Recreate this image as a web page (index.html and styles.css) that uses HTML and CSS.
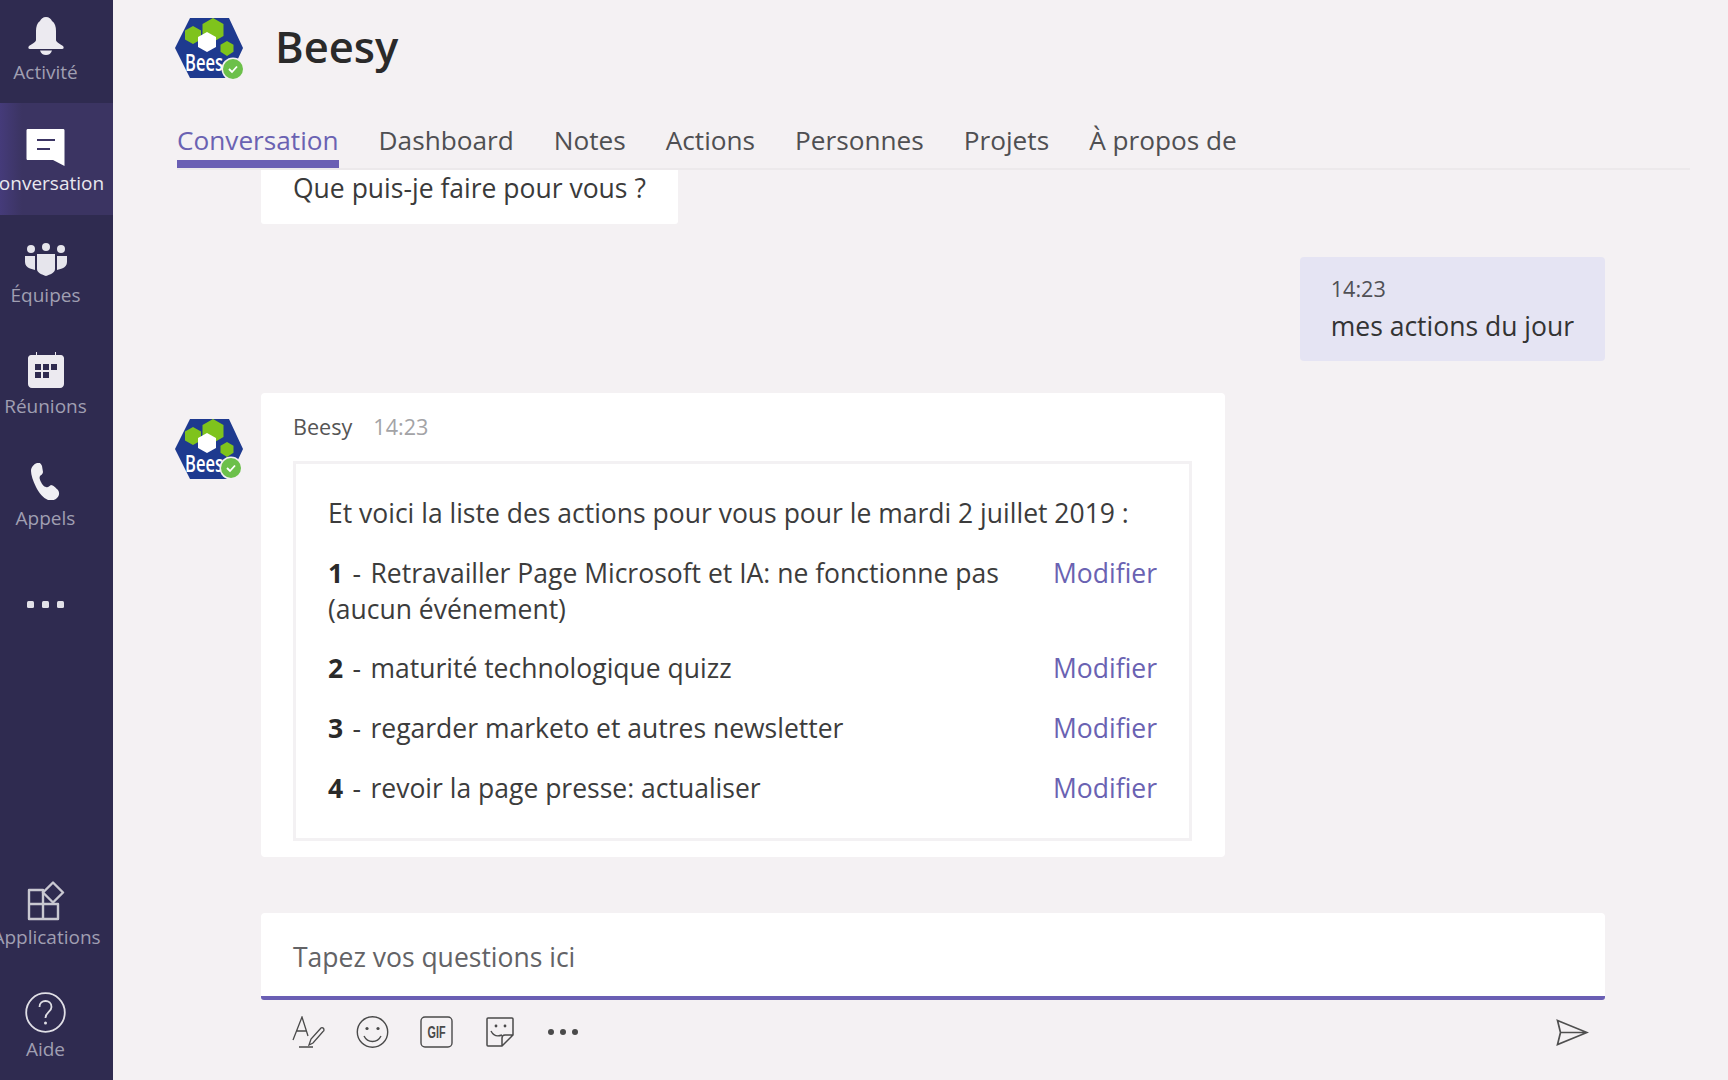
FILE: index.html
```html
<!DOCTYPE html>
<html lang="fr">
<head>
<meta charset="utf-8">
<title>Beesy</title>
<link rel="stylesheet" href="styles.css">
</head>
<body>
<div class="app">
  <nav class="rail">
    <div class="rail-inner">
      <div class="rail-item">
        <div class="rail-icon">
          <svg width="36" height="38" viewBox="0 0 36 38"><path fill="#eceaf0" d="M18 0c3 0 5 2 6 4 3 2 4 6 4 10v9c0 2 4 4 7 6 1 1 1 3-1 3H2c-2 0-2-2-1-3 3-2 7-4 7-6v-9c0-4 1-8 4-10 1-2 3-4 6-4z"/><path fill="#eceaf0" d="M12 33.500h12c-1 3-3 4.500-6 4.500s-5-1.500-6-4.500z"/></svg>
        </div>
        <span class="rail-label">Activité</span>
      </div>
      <div class="rail-item rail-item-active">
        <div class="rail-icon">
          <svg width="39" height="37" viewBox="0 0 39 37"><path fill="#fff" d="M2 0h35c1 0 1.500.500 1.500 1.500V37L27 31H2c-1 0-1.500-.500-1.500-1.500v-28C.5.500 1 0 2 0z"/><path fill="none" stroke="#3c3564" stroke-width="1.800" d="M11 11h18M11 20h13"/></svg>
        </div>
        <span class="rail-label rail-label-long">Conversation</span>
      </div>
      <div class="rail-item">
        <div class="rail-icon rail-icon-low">
          <svg width="42" height="33" viewBox="0 0 42 33"><g fill="#e6e5ec"><circle cx="6" cy="6" r="4"/><circle cx="21" cy="4" r="4"/><circle cx="36" cy="6" r="4"/><path d="M0 13h10v14l-5-1.500C2 24.500 0 22 0 19zM32 13h10v6c0 3-2 5.500-5 6.500L32 27zM12 11h18v15c0 4-5 5.500-9 7-4-1.500-9-3-9-7z"/></g></svg>
        </div>
        <span class="rail-label">Équipes</span>
      </div>
      <div class="rail-item">
        <div class="rail-icon">
          <svg width="36" height="36" viewBox="0 0 36 36"><path fill="#eceaf0" d="M3 3h5V0h1v3h18V0h1v3h5c1.500 0 3 1.500 3 3v26c0 2-1.500 4-4 4H4c-2.500 0-4-2-4-4V6c0-1.500 1.500-3 3-3z"/><g fill="#2f2b50"><rect x="7" y="12" width="6" height="6"/><rect x="15" y="12" width="6" height="6"/><rect x="23" y="12" width="6" height="6"/><rect x="7" y="20" width="6" height="6"/><rect x="15" y="20" width="6" height="6"/></g></svg>
        </div>
        <span class="rail-label">Réunions</span>
      </div>
      <div class="rail-item">
        <div class="rail-icon">
          <svg width="29" height="37" viewBox="0 0 29 37"><path fill="#f0eff3" d="M6 0c3-1 4 1 5 3l1 6c0 2-2 3-3 4-1 2 0 4 1 6s3 5 5 5c2 1 3-1 5-2 2 0 5 3 7 5 2 3 1 6-1 8-2 2-5 3-9 2-5-2-9-7-12-13C2 18 0 12 0 8c0-4 3-7 6-8z"/></svg>
        </div>
        <span class="rail-label">Appels</span>
      </div>
      <div class="rail-more">
        <span class="rail-dot"></span><span class="rail-dot"></span><span class="rail-dot"></span>
      </div>
      <div class="rail-item rail-item-apps">
        <div class="rail-icon">
          <svg width="38" height="40" viewBox="0 0 38 40"><g fill="none" stroke="#c9c8d1" stroke-width="2.400" stroke-linejoin="round"><path d="M2 9h14v14H2zM2 23h14v15H2zM16 23h15v15H16z"/><path d="M26 1.500l10 10-10 10-10-10z"/></g></svg>
        </div>
        <span class="rail-label rail-label-apps">Applications</span>
      </div>
      <div class="rail-item">
        <div class="rail-icon">
          <svg width="41" height="41" viewBox="0 0 41 41"><circle cx="20.500" cy="20.500" r="19.300" fill="none" stroke="#e0dfe6" stroke-width="1.800"/><path fill="none" stroke="#e0dfe6" stroke-width="1.800" d="M14.500 15c0-4 3-6 6-6s6 2 6 6c0 5-6 5-6 11"/><circle cx="20.500" cy="31" r="1.500" fill="#e0dfe6"/></svg>
        </div>
        <span class="rail-label">Aide</span>
      </div>
    </div>
  </nav>

  <main class="main">
    <header class="header">
      <svg class="logo" width="68" height="62" viewBox="0 0 68 62">
        <path fill="#1e3a8f" d="M15 0h39l14 30-14 30H15L0 30z"/>
        <path fill="#7fc31c" d="M18 8l8 4.500v9L18 26l-8-4.500v-9zM38 0l10.500 6v12L38 24l-10.500-6V6zM52 23l6.500 3.800v7L52 38l-6.500-4.200v-7z"/>
        <path fill="#fff" d="M32 14l9 5v10l-9 5-9-5V19z"/>
        <text class="logo-text" x="10" y="53" textLength="38" lengthAdjust="spacingAndGlyphs">Bees</text>
        <circle cx="58" cy="51" r="11.500" fill="#f4f1f3"/>
        <circle cx="58" cy="51" r="10" fill="#6cc04a"/>
        <path fill="none" stroke="#fff" stroke-width="1.800" d="M54 51l3 3 5-5.500"/>
      </svg>
      <h1 class="title">Beesy</h1>
    </header>

    <div class="tabs">
      <span class="tab tab-active">Conversation</span>
      <span class="tab">Dashboard</span>
      <span class="tab">Notes</span>
      <span class="tab">Actions</span>
      <span class="tab">Personnes</span>
      <span class="tab">Projets</span>
      <span class="tab">À propos de</span>
    </div>

    <section class="thread">
      <div class="bubble-top">Que puis-je faire pour vous ?</div>
      <div class="bubble-own">
        <div class="meta-time-own">14:23</div>
        <div class="bubble-text">mes actions du jour</div>
      </div>
      <div class="msg-row">
        <svg class="logo" width="68" height="62" viewBox="0 0 68 62">
          <path fill="#1e3a8f" d="M15 0h39l14 30-14 30H15L0 30z"/>
          <path fill="#7fc31c" d="M18 8l8 4.500v9L18 26l-8-4.500v-9zM38 0l10.500 6v12L38 24l-10.500-6V6zM52 23l6.500 3.800v7L52 38l-6.500-4.200v-7z"/>
          <path fill="#fff" d="M32 14l9 5v10l-9 5-9-5V19z"/>
          <text class="logo-text" x="10" y="53" textLength="38" lengthAdjust="spacingAndGlyphs">Bees</text>
          <circle cx="56" cy="49" r="11.500" fill="#f4f1f3"/>
          <circle cx="56" cy="49" r="10" fill="#6cc04a"/>
          <path fill="none" stroke="#fff" stroke-width="1.800" d="M52 49l3 3 5-5.500"/>
        </svg>
        <article class="card">
          <div class="card-head"><span class="sender">Beesy</span><span class="time">14:23</span></div>
          <div class="card-box">
            <p class="intro">Et voici la liste des actions pour vous pour le mardi 2 juillet 2019 :</p>
            <div class="action"><p class="action-text"><b>1</b> <span class="dash">-</span> Retravailler Page Microsoft et IA: ne fonctionne pas (aucun événement)</p><span class="action-link">Modifier</span></div>
            <div class="action"><p class="action-text"><b>2</b> <span class="dash">-</span> maturité technologique quizz</p><span class="action-link">Modifier</span></div>
            <div class="action"><p class="action-text"><b>3</b> <span class="dash">-</span> regarder marketo et autres newsletter</p><span class="action-link">Modifier</span></div>
            <div class="action"><p class="action-text"><b>4</b> <span class="dash">-</span> revoir la page presse: actualiser</p><span class="action-link">Modifier</span></div>
          </div>
        </article>
      </div>
    </section>

    <div class="composer">Tapez vos questions ici</div>

    <div class="toolbar">
      <svg class="tool" width="33" height="32" viewBox="0 0 33 32"><g fill="none" stroke="#4a4a4a" stroke-width="1.300"><path d="M1 24L10 1l6 19M4 15h10M7 31h14"/><path d="M17 29l2-6 10-11c1-1 3 0 3 2 0 .5 0 1-1 1.500L21 27z"/></g></svg>
      <svg class="tool" width="33" height="32" viewBox="0 0 33 32"><circle cx="16.500" cy="16" r="15.200" fill="none" stroke="#4a4a4a" stroke-width="1.400"/><circle cx="11" cy="12.500" r="1.600" fill="#4a4a4a"/><circle cx="22" cy="12.500" r="1.600" fill="#4a4a4a"/><path fill="none" stroke="#4a4a4a" stroke-width="1.400" d="M8 20c2 4 5 5.500 8.500 5.500S23 24 25 20"/></svg>
      <svg class="tool" width="33" height="32" viewBox="0 0 33 32"><rect x="1" y="1" width="31" height="30" rx="4" fill="none" stroke="#4a4a4a" stroke-width="1.400"/><text class="gif-text" x="7.500" y="22" textLength="18" lengthAdjust="spacingAndGlyphs">GIF</text></svg>
      <svg class="tool tool-sticker" width="28" height="30" viewBox="0 0 28 30"><path fill="none" stroke="#4a4a4a" stroke-width="1.500" d="M2 1h24c.5 0 1 .5 1 1v16L16 29H2c-.5 0-1-.5-1-1V2c0-.5.500-1 1-1zM16 29v-8c0-2 1-3 3-3h8"/><circle cx="10" cy="9" r="1.400" fill="#4a4a4a"/><circle cx="19" cy="9" r="1.400" fill="#4a4a4a"/><path fill="none" stroke="#4a4a4a" stroke-width="1.400" d="M5 14c2 4 6 6 11 4"/></svg>
      <div class="tool-more"><span class="tool-dot"></span><span class="tool-dot"></span><span class="tool-dot"></span></div>
      <svg class="send" width="33" height="27" viewBox="0 0 33 27"><path fill="none" stroke="#4f4f4f" stroke-width="1.700" d="M1.500 1.500L31 13.500 1.500 25.500 4.500 13.500zM4.500 13.500H31"/></svg>
    </div>
  </main>
</div>
</body>
</html>
```

FILE: styles.css
```css
* { box-sizing: border-box; }
html, body { margin: 0; padding: 0; }
body {
  width: 1728px;
  height: 1080px;
  overflow: hidden;
  background: #f4f1f3;
  font-family: "Open Sans", "Noto Sans", sans-serif;
  color: #3a3a3a;
}
.app { display: flex; height: 1080px; }

/* Left rail */
.rail {
  width: 113px;
  flex: none;
  height: 1080px;
  overflow: hidden;
  background: #2f2b50;
}
.rail-inner {
  display: flex;
  flex-direction: column;
  height: 1088px;
  margin-top: -8px;
}
.rail-item {
  display: flex;
  flex-direction: column;
  align-items: center;
  width: 100%;
  height: 111.4px;
  padding: 24px 22px 0 0;
  flex: none;
  white-space: nowrap;
}
.rail-item-active {
  background: linear-gradient(90deg, #453b7a 0, #3b3462 22px, #3b3462 100%);
}
.rail-item-apps { margin-top: auto; }
.rail-icon {
  height: 40px;
  display: flex;
  align-items: center;
  justify-content: center;
  flex: none;
}
.rail-icon-low { padding-top: 2px; }
.rail-label {
  margin-top: 4px;
  height: 24px;
  line-height: 24px;
  font-size: 19px;
  color: #a09fb2;
}
.rail-item-active .rail-label { color: #e9e8ef; }
.rail-label-long { margin-left: 0; }
.rail-label-apps { margin-left: 2px; }
.rail-more {
  display: flex;
  gap: 8px;
  width: 91px;
  justify-content: center;
  padding-top: 52px;
  height: 60px;
}
.rail-dot {
  width: 7px;
  height: 7px;
  border-radius: 1.500px;
  background: #e2e1e8;
}

/* Main column */
.main {
  flex: 1;
  min-width: 0;
  display: flex;
  flex-direction: column;
  height: 1080px;
}
.header {
  height: 96px;
  padding: 18px 0 0 62px;
  display: flex;
  align-items: flex-start;
  gap: 32px;
  flex: none;
}
.logo { flex: none; display: block; }
.logo-text {
  font-family: "Open Sans", sans-serif;
  font-size: 24px;
  font-weight: 600;
  fill: #fff;
}
.title {
  margin: 0;
  font-size: 43.500px;
  font-weight: 600;
  line-height: 58px;
  color: #2a2a2a;
}
.tabs {
  height: 74px;
  margin: 0 38px 0 64px;
  display: flex;
  align-items: flex-end;
  gap: 40px;
  border-bottom: 2px solid #ece9eb;
  flex: none;
}
.tab {
  font-size: 26.200px;
  line-height: 36px;
  padding-bottom: 2px;
  border-bottom: 8px solid transparent;
  white-space: nowrap;
  color: #4f4f52;
}
.tab-active {
  color: #6a62b2;
  border-bottom-color: #6a5fb4;
}

/* Thread */
.thread {
  flex: 1;
  min-height: 0;
  overflow: hidden;
  display: flex;
  flex-direction: column;
  align-items: flex-start;
  padding-left: 62px;
  font-size: 26.500px;
  line-height: 36px;
}
.bubble-top {
  margin-left: 86px;
  padding: 0 32px 18px;
  background: #fff;
  border-radius: 0 0 3px 3px;
}
.bubble-own {
  align-self: flex-end;
  margin: 33px 123px 0 0;
  padding: 16px 31px 17px;
  background: #e5e4f3;
  border-radius: 4px;
}
.meta-time-own {
  font-size: 21.600px;
  line-height: 32px;
  color: #505055;
  margin-bottom: 3px;
}
.bubble-text { color: #333; }
.msg-row {
  display: flex;
  gap: 18px;
  margin-top: 32px;
  align-items: flex-start;
}
.msg-row .logo { margin-top: 26px; }
.card {
  width: 964px;
  padding: 19px 33px 16px 32px;
  background: #fff;
  border-radius: 4px;
}
.card-head {
  display: flex;
  gap: 21px;
  height: 49px;
  font-size: 21.600px;
  line-height: 30px;
}
.sender { color: #555; }
.time { color: #a3a3a6; }
.card-box {
  border: 3px solid #f3f1f3;
  padding: 31px 32px 32px;
  display: flex;
  flex-direction: column;
  gap: 23.700px;
}
.intro { margin: 0; color: #3c3c3c; }
.action { display: flex; align-items: flex-start; }
.action-text { margin: 0; flex: 1; padding-right: 30px; color: #3c3c3c; }
.action-text b { font-weight: 700; color: #2a2a2a; }
.dash { margin: 0 2.500px; }
.action-link { flex: none; color: #6a62b2; }

/* Composer */
.composer {
  flex: none;
  margin-left: 148px;
  width: 1344px;
  height: 87px;
  padding: 0 32px;
  background: #fff;
  border-bottom: 4px solid #6a5fb4;
  border-radius: 4px 4px 3px 3px;
  font-size: 26.500px;
  line-height: 89px;
  color: #636366;
}
.toolbar {
  flex: none;
  height: 80px;
  margin-left: 148px;
  width: 1344px;
  padding: 0 16px 16px 31px;
  display: flex;
  align-items: center;
  gap: 31px;
}
.tool { flex: none; display: block; }
.tool-sticker { margin-left: 2px; }
.gif-text {
  font-family: "Liberation Sans", sans-serif;
  font-size: 16px;
  font-weight: 700;
  fill: #4a4a4a;
}
.tool-more { display: flex; gap: 6px; flex: none; margin-left: 3px; }
.tool-dot {
  width: 6px;
  height: 6px;
  border-radius: 50%;
  background: #4a4a4a;
}
.send { flex: none; margin-left: auto; }
```
